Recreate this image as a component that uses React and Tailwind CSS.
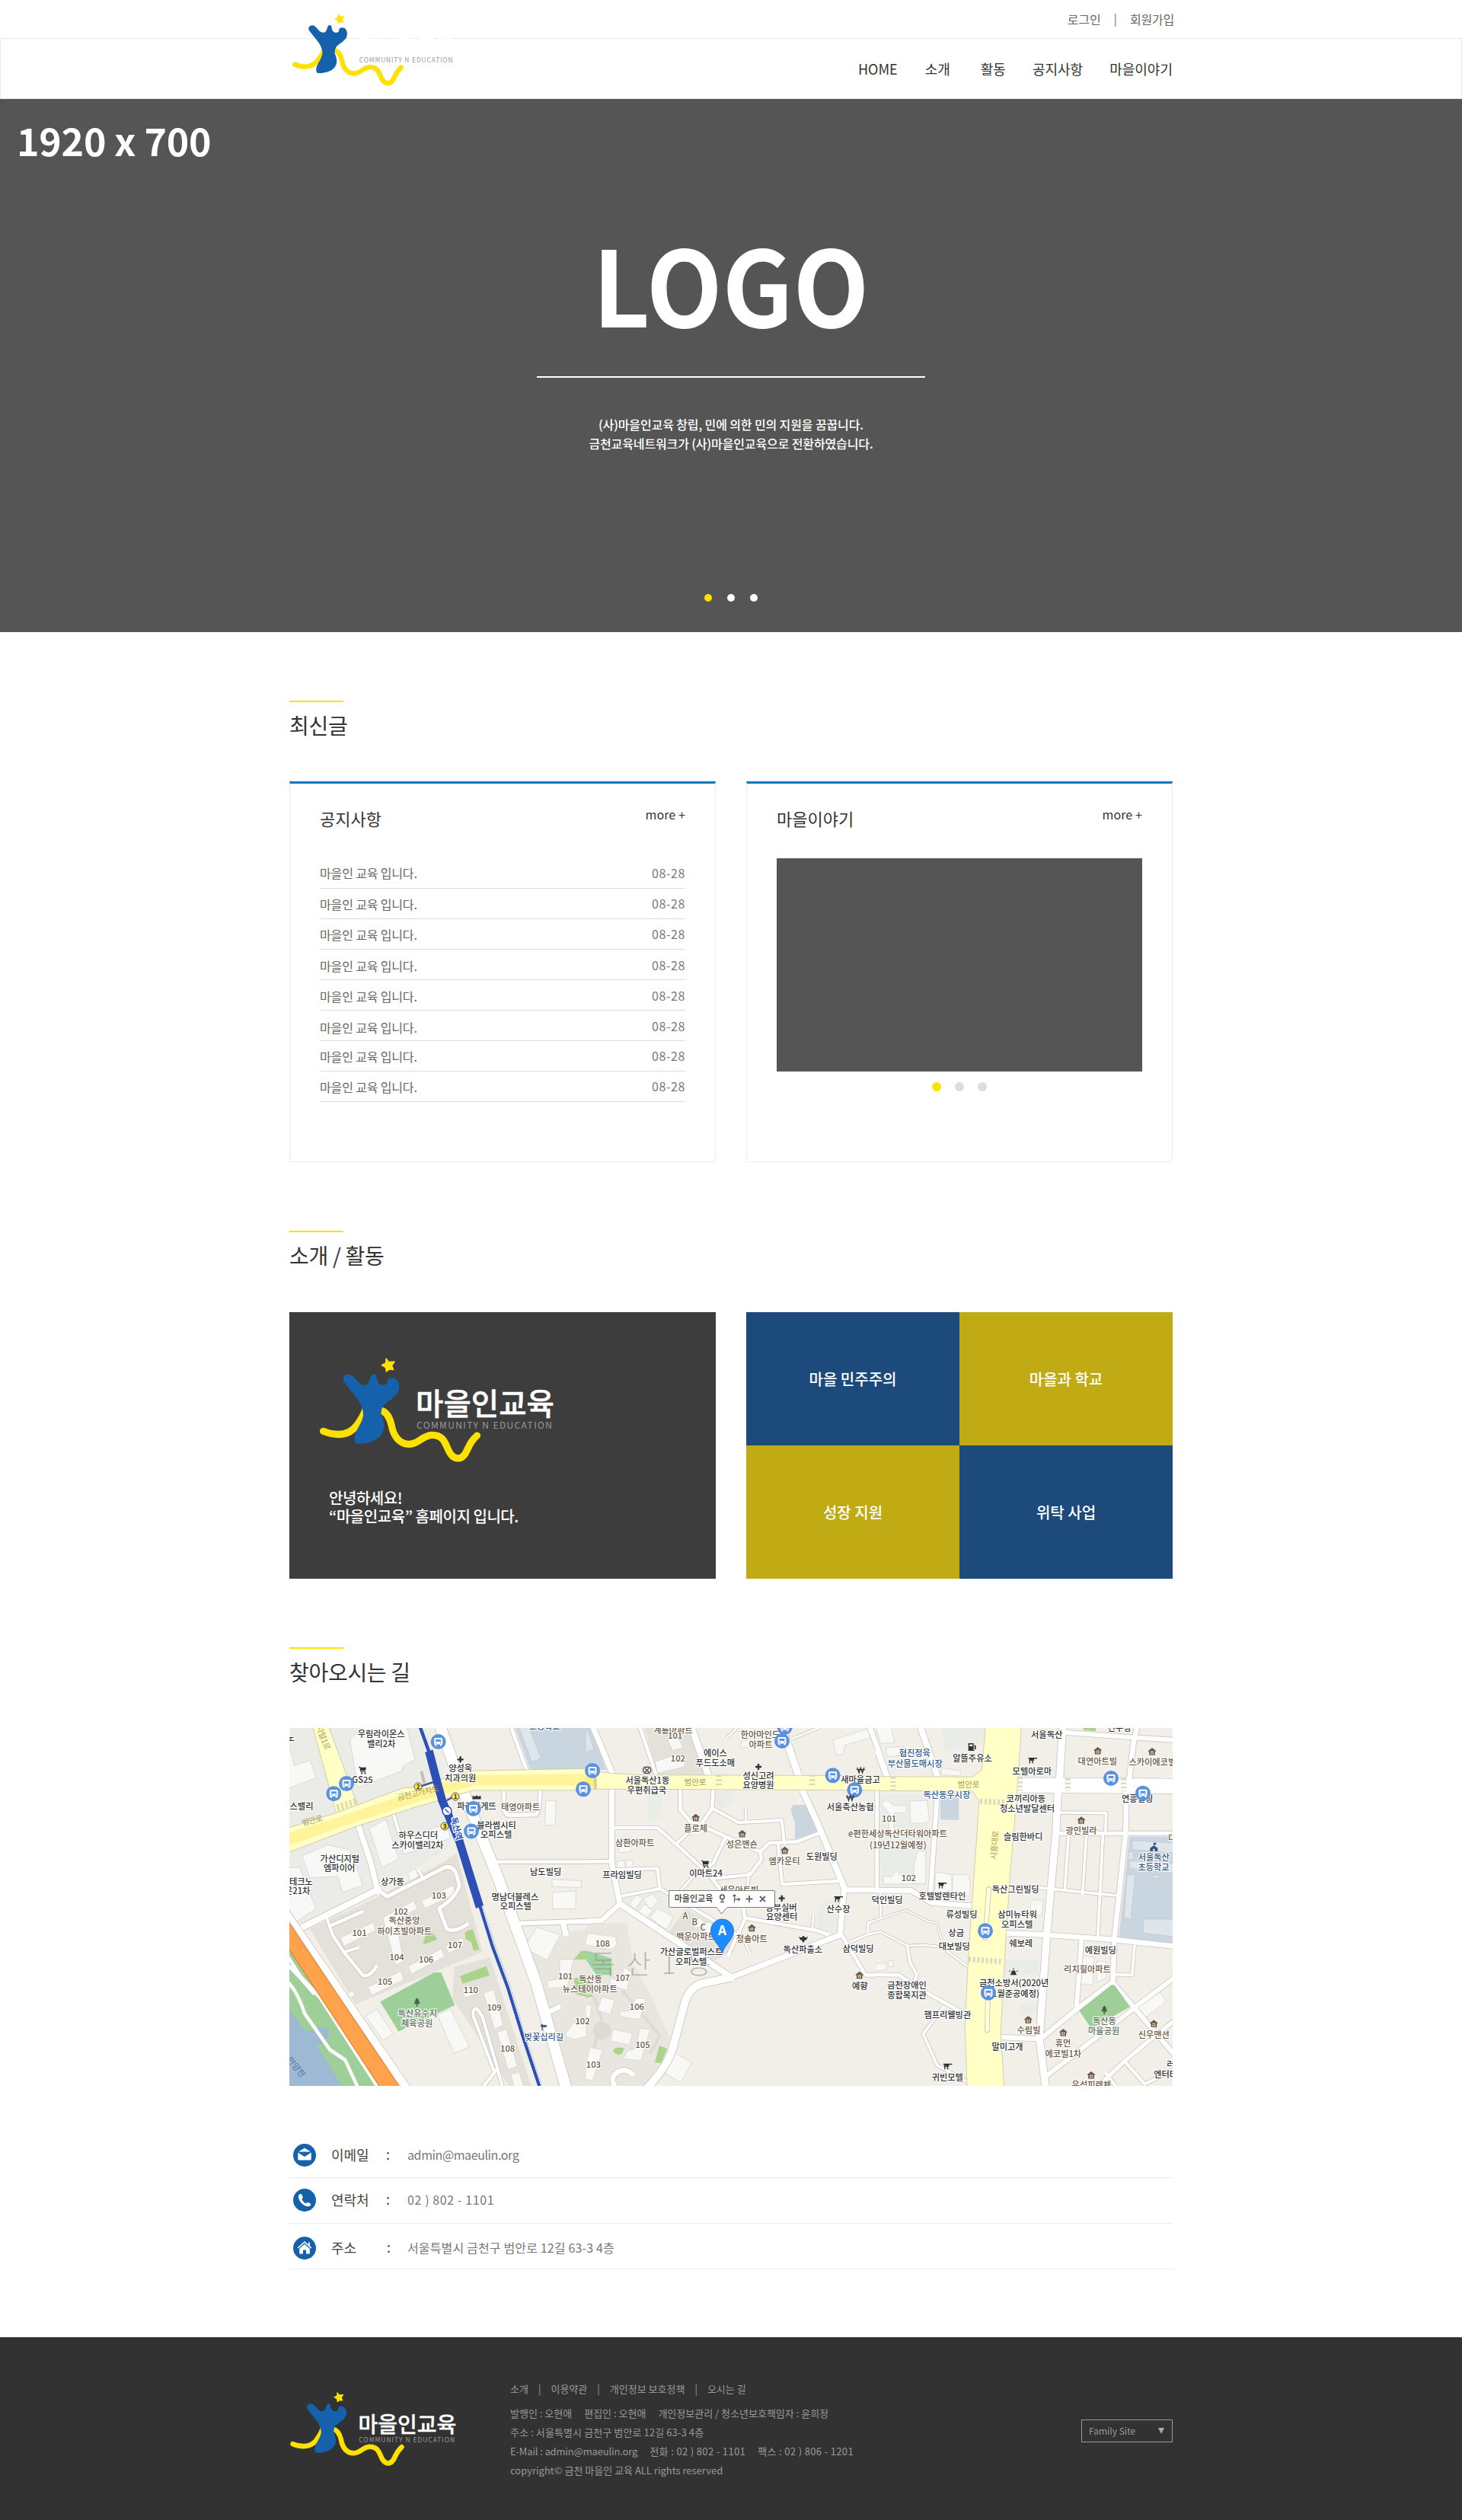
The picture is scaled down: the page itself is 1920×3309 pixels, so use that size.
import React from "react";

const YELLOW = "#ffe100";
const BLUE = "#1661ac";

function Logo({ className }) {
  return (
    <svg viewBox="0 0 307 137" className={className} role="img" aria-label="마을인교육">
      <g fill="none" stroke={YELLOW} strokeWidth="9.2" strokeLinecap="round">
        <path d="M4.6 96.3C22 103 38 103 49 88C54 81 57 77 60 68" />
        <path d="M80 69C89 71 92 80 94 88C97 104 105 113 117.500 113.300C131 113 134 102 147 101.300C166 101 165 118 172 126.500C178 134 186 134 191.500 125C197 114 198 110 206.500 102" />
      </g>
      <path
        fill={BLUE}
        d="M32 32C29 27 32 21.500 38 21.700C45 22 49 32 55 35C62 37 64 34 65.600 29C67 23 69 21.300 71 21.300C74 21.300 74.500 24 75.400 30C77 34 81 36 84 35.600C91 35 87 30 90 27.500C94 25 100 26 102 30C105 36 104.500 40 103 44C99 53 88 57 83.500 63C80 68 80.500 73 81 76C84 83 85 88 84 93C82 103 75 108 64.700 111C58 113 53 113 48.200 112.700C45 111 44.500 105 46 101C49 92 56 85 57 75C57.500 66 51 55 45.500 49Z"
      />
      <path
        fill={YELLOW}
        stroke={YELLOW}
        strokeWidth="1.500"
        strokeLinejoin="round"
        d="M87 1L90.500 5.500L98 5L94.500 10L96.500 15.500L91 15L87.500 18L86.500 12.500L81.500 9.500L86.700 7Z"
      />
      <text x="126" y="75" fontSize="40" fontWeight="500" fill="#fff" stroke="#fff" strokeWidth="0.5" textLength="182" lengthAdjust="spacingAndGlyphs">
        마을인교육
      </text>
      <text x="127" y="93" fontSize="12" fill="#999" textLength="178">
        COMMUNITY N EDUCATION
      </text>
    </svg>
  );
}

function SectionTitle({ children }) {
  return (
    <div className="h-[106px]">
      <div className="h-0.5 w-[71px] bg-[#ffe100]" />
      <h2 className="pt-[10px] text-[28px] leading-[40px] tracking-[-0.3px] text-[#333]">{children}</h2>
    </div>
  );
}

const notices = [
  { pad: "pt-0", date: "pt-0" },
  { pad: "pt-[1px]", date: "pt-0" },
  { pad: "pt-[1px]", date: "pt-0" },
  { pad: "pt-[2px]", date: "pt-[1px]" },
  { pad: "pt-[2px]", date: "pt-[1px]" },
  { pad: "pt-[3px]", date: "pt-[1px]" },
  { pad: "pt-[1px]", date: "pt-0" },
  { pad: "pt-[1px]", date: "pt-0" },
];

function PanelHead({ title }) {
  return (
    <div className="flex h-8 justify-between text-[#333]">
      <h3 className="text-[22px] leading-[30px]">{title}</h3>
      <a className="text-base leading-5 tracking-[0.1px]">more +</a>
    </div>
  );
}

/* ---------- Map ---------- */

// Each sheet has its own drawing grid that is projected onto the map.
const sheets = {
  w: { ox: -10, oy: -119, sx: 1 / 3, sy: 0.3827 },
  c: { ox: 360, oy: -9, sx: 1 / 3, sy: 1 / 3 },
  e: { ox: 760, oy: -9, sx: 1 / 3, sy: 1 / 3 },
};
const matrix = (s) => `matrix(${s.sx} 0 0 ${s.sy} ${s.ox} ${s.oy})`;

const roads = {
  w: [
    ["M622 300L720 540L850 820L1000 1180L1125 1560", 42],
    ["M900 300L965 455", 14],
    ["M835 770L1210 770", 12],
    ["M920 982L1210 974", 16],
    ["M300 640L350 770L378 870", 22],
    ["M70 1000L380 865", 22],
    ["M385 870L415 890L640 790Q680 780 690 820L700 850Q690 890 620 930L650 1000Q680 1015 730 985", 14],
    ["M180 970L200 1020L245 1080L320 1160Q350 1165 372 1130", 12],
    ["M190 990L316 942", 12],
    ["M245 1080L300 1065", 10],
    ["M875 520L875 590Q880 610 900 610L1000 608Q1018 605 1018 520", 14],
    ["M440 605L465 680", 12],
    ["M540 800L560 830", 10],
    ["M835 1485L755 1300Q750 1270 770 1275L790 1300L850 1480L870 1545", 12],
    ["M790 1545L850 1480", 12],
    ["M1110 985L1118 1015", 22],
    ["M1040 1290L1090 1270", 18],
  ],
  c: [
    ["M115 20L190 200L190 560L222 720", 22],
    ["M300 20L365 212", 14],
    ["M503 20L570 212", 26],
    ["M860 20L925 212", 28],
    ["M940 270L1000 400L1110 665", 24],
    ["M1205 20L1262 170", 20],
    ["M460 265L460 350L500 395L540 410L585 345L590 265", 14],
    ["M590 345L690 400L860 390L870 480", 12],
    ["M540 410L640 455L775 515L810 480L920 475L1010 440", 14],
    ["M205 420L370 420L450 490L570 600L620 665", 13],
    ["M448 480L520 412", 12],
    ["M640 455L590 560L560 580", 13],
    ["M775 515L780 545L735 605L590 620", 13],
    ["M845 480L862 643L1080 630", 13],
    ["M-10 555L185 552", 14],
    ["M210 585L370 580L380 660L225 690", 12],
    ["M380 660L600 790L680 840", 13],
    ["M222 720L150 785L-10 795", 20],
    ["M222 720L660 1008", 24],
    ["M660 1010L540 1035Q490 1055 475 1120L430 1290Q410 1360 325 1450", 30],
    ["M660 1010L1090 842L1105 665", 22],
    ["M1105 665L1270 665", 20],
    ["M715 775L1000 825L1040 840", 14],
    ["M650 920L715 780L710 740", 14],
    ["M980 820L985 765", 8],
    ["M1095 840L1190 1000L1270 1000", 14],
    ["M1130 870L1200 840L1262 828M1200 830L1200 795L1262 775", 9],
    ["M520 600L460 670M730 600L725 650", 10],
    ["M718 340L718 400M710 860L735 915", 8],
    ["M1235 275L1235 660", 14],
    ["M-10 1330L20 1445", 20],
    ["M200 1437Q180 1390 230 1376Q250 1372 270 1390", 20],
    ["M640 70L690 20M900 70L1010 25", 8],
  ],
  e: [
    ["M5 20L75 222", 24],
    ["M205 20L275 222", 24],
    ["M600 252L1210 256", 58],
    ["M767 20L755 225M748 285L740 440L705 830L675 1250L700 1445", 28],
    ["M780 45L1060 65L1210 75", 18],
    ["M1060 20L1045 90L1030 225", 20],
    ["M1018 285L1015 440L970 860L965 1030", 20],
    ["M752 360L938 362L935 440", 11],
    ["M740 442L1210 442", 16],
    ["M790 450L775 665M860 450L845 680M925 450L905 855", 11],
    ["M610 650L980 687", 11],
    ["M545 835L700 842L960 860L1210 887", 20],
    ["M840 870L822 1120", 18],
    ["M1050 885L1040 1000L970 998", 11],
    ["M525 1245L680 1252L830 1128L962 1028L1050 1130L1210 1318", 19],
    ["M1050 1128L1210 1008M1050 1130L700 1400", 18],
    ["M1210 1178L1130 1240L1010 1340L900 1445", 16],
    ["M1010 1340L1090 1430L1210 1370M940 1390L980 1445", 13],
    ["M35 275L35 660", 14],
    ["M272 300L245 690", 18],
    ["M-10 667L170 667L250 715L410 728", 20],
    ["M50 680L50 770", 8],
    ["M-10 797L150 745L235 788L270 795L290 865", 6],
    ["M-10 842L50 830L155 885L220 882L290 890L390 965", 8],
    ["M155 885L165 950L193 1000L180 1030", 11],
    ["M-10 998L120 1000L230 1070L385 1155", 14],
    ["M295 1130L217 1232L272 1355L390 1420", 11],
  ],
};

const yellow = {
  w: [
    "M120 300L182 300L300 578L215 605Z",
    "M20 655L215 602L480 516L510 516L740 458L1210 450L1210 525L755 525L530 582L290 650L20 740Z",
  ],
  c: ["M-5 193L60 192L200 206L300 212L1265 215L1265 273L300 268L-5 268Z"],
  e: [
    "M-5 218L412 220L448 192L463 20L604 20L587 280L560 600L543 850L522 1230L536 1445L390 1445L382 1200L395 930L438 315L410 276L-5 274Z",
  ],
};

const buildings = {
  w: [
    "M268 350L330 300L490 300L525 420L480 440L470 460L300 515Z",
    "M30 370L50 440L112 422L135 482L20 520L20 380Z",
    "M80 750L180 712L270 730L320 850L240 875L220 820L110 825Z",
    "M345 655L410 625L460 760L395 790Z",
    "M470 690L650 640L665 690L480 745Z",
    "M20 790L70 790L135 930L60 975L20 920Z",
    "M495 810L525 793L540 820L508 836Z",
    "M550 905L675 850L685 880L565 930Z",
    "M400 960L520 905L535 930L450 970L480 1110L450 1125L405 985Z",
    "M232 1030L360 978L370 1005L245 1060Z",
    "M645 1060L712 1030L720 1055L658 1085Z",
    "M498 1128L630 1068L642 1095L512 1155Z",
    "M340 1200L470 1145L480 1175L355 1228Z",
    "M260 1220L282 1213L288 1230L268 1238Z",
    "M330 1300L375 1275L438 1360L400 1383Z",
    "M612 1295L665 1275L740 1405L680 1428Z",
    "M712 1208L775 1193L780 1220L720 1237Z",
    "M795 1220L835 1208L873 1330L838 1345Z",
    "M848 1355L885 1345L928 1470L892 1485Z",
    "M903 1500L935 1490L955 1545L915 1545Z",
    "M955 1065L1005 995L1098 1020L1045 1108Z",
    "M1040 560L1080 560L1078 645L1037 645Z",
    "M1065 875L1160 870L1158 932L1068 932Z",
    "M1065 830L1180 835L1180 858L1065 855Z",
    "M1095 1105L1150 1105L1125 1200L1050 1205L1045 1180L1095 1170Z",
    "M1150 1320L1200 1320L1200 1370L1150 1380L1115 1365Z",
  ],
  c: [
    "M360 160L450 130L480 160L475 180L370 205Z",
    "M410 75L450 60L470 105L430 115Z",
    "M700 80L760 65L765 100L698 104Z",
    "M1060 75L1200 30L1210 65L1110 95L1100 130L1075 135Z",
    "M218 465L265 460L265 515L218 518Z",
    "M210 553L240 548L242 578L212 580ZM245 550L272 547L274 576L248 578Z",
    "M-5 625L72 625L70 660L-5 660ZM-5 670L50 670L48 738L-5 738Z",
    "M258 720L290 685L312 700L282 740Z",
    "M315 700L352 680L375 710L340 740ZM290 755L320 720L352 745L322 780Z",
    "M340 775L370 738L435 770L405 822Z",
    "M95 835L205 850L210 880L190 900L85 880Z",
    "M-5 940L40 940L30 1000L-5 1020Z",
    "M240 970L268 990L250 1060L180 1040L185 1015L225 1015Z",
    "M150 1085L202 1100L185 1155L135 1140Z",
    "M285 1090L325 1095L300 1175L225 1165L220 1145L265 1140Z",
    "M75 1115L112 1120L105 1165L60 1250L5 1220L5 1195L50 1190Z",
    "M195 1215L272 1230L260 1275L185 1260Z",
    "M300 1210L342 1215L305 1338L235 1330L250 1300L285 1290Z",
    "M105 1285L155 1295L115 1415L50 1405L48 1375L85 1365Z",
    "M440 1308L505 1345L462 1425L400 1387Z",
    "M505 790L540 775L560 800L520 815ZM545 800L580 790L600 830L560 835Z",
  ],
  e: [
    "M30 20L90 20L105 85L50 88Z",
    "M70 105L140 100L140 135L75 140Z",
    "M52 325L72 308L100 332L150 332L150 360L102 362L102 435L82 435L82 362Z",
    "M165 315L232 312L242 390L225 402L168 402Z",
    "M60 612L95 612L110 590L135 612L182 612L180 575L195 512L227 512L227 640L62 642Z",
    "M275 595L330 605L330 700L262 705L265 600Z",
    "M333 605L395 605L403 640L400 690L333 672Z",
    "M290 185L365 195L362 215L290 212Z",
    "M640 705L690 705L685 765L640 762Z",
    "M845 925L890 930L885 1040L838 1035Z",
    "M900 945L940 948L940 1010L900 1030Z",
    "M1060 1130L1150 1065L1175 1105L1090 1170Z",
    "M30 955L70 952L72 980L30 983ZM78 945L98 942L100 965L80 968Z",
  ],
};

const DARK = "#2f3338";
const BROWN = "#6a5744";
const NAVY = "#2f5f96";

// [sheet, centre x, centre y, text, colour]
const labels = [
  ["w", 392, 330, "우림라이온스"], ["w", 392, 364, "밸리2차"],
  ["w", 318, 488, "GS25"], ["w", 78, 579, "스밸리"],
  ["w", 704, 449, "양성욱"], ["w", 704, 483, "치과의원"],
  ["w", 768, 579, "파리바게뜨"], ["w", 941, 583, "태영아파트", BROWN],
  ["w", 846, 645, "블라썸시티"], ["w", 845, 677, "오피스텔"],
  ["w", 538, 680, "하우스디더"], ["w", 535, 713, "스카이밸리2차"],
  ["w", 229, 759, "가산디지털"], ["w", 227, 792, "엠파이어"],
  ["w", 76, 837, "테크노"], ["w", 62, 870, "운21차"],
  ["w", 436, 837, "상가동"], ["w", 1040, 805, "남도빌딩"],
  ["w", 919, 890, "명남더블레스"], ["w", 922, 923, "오피스텔"],
  ["w", 483, 972, "독산중앙", BROWN], ["w", 484, 1007, "하이츠빌아파트", BROWN],
  ["w", 619, 885, "103", BROWN], ["w", 469, 939, "102", BROWN],
  ["w", 306, 1013, "101", BROWN], ["w", 453, 1096, "104", BROWN],
  ["w", 569, 1106, "106", BROWN], ["w", 683, 1054, "107", BROWN],
  ["w", 407, 1180, "105", BROWN], ["w", 745, 1210, "110", BROWN],
  ["w", 837, 1269, "109", BROWN], ["w", 890, 1410, "108", BROWN],
  ["w", 1118, 1162, "101", BROWN],
  ["w", 535, 1290, "독산유수지", "#5d6e5b"], ["w", 533, 1323, "체육공원", "#5d6e5b"],
  ["w", 1033, 1372, "벚꽃십리길", "#3c5e8e"],
  ["w", 1036, 306, "고등학교", NAVY], ["w", 36, 345, "노"],

  ["c", 432, 36, "계룡아파트", BROWN], ["c", 440, 57, "101", BROWN], ["c", 451, 147, "102", BROWN],
  ["c", 775, 53, "한아마인드", BROWN], ["c", 777, 93, "아파트", BROWN],
  ["c", 598, 124, "에이스"], ["c", 598, 163, "푸드도소매"],
  ["c", 768, 215, "성신고려"], ["c", 768, 252, "요양병원"],
  ["c", 331, 234, "서울독산1동"], ["c", 328, 272, "우편취급국"],
  ["c", 1170, 230, "새마을금고"], ["c", 1130, 339, "서울축산농협"],
  ["c", 521, 421, "플로체", BROWN], ["c", 281, 480, "삼환아파트", BROWN],
  ["c", 703, 485, "성은맨숀", BROWN], ["c", 870, 550, "엠카운티", BROWN],
  ["c", 1018, 532, "도원빌딩"], ["c", 231, 606, "프라임빌딩"], ["c", 561, 600, "이마트24"],
  ["c", 692, 665, "세운아트빌", BROWN], ["c", 858, 733, "남부실버"], ["c", 860, 771, "요양센터"],
  ["c", 1083, 741, "산수장"], ["c", 480, 766, "A", BROWN], ["c", 517, 791, "B", BROWN], ["c", 549, 811, "C", BROWN],
  ["c", 522, 849, "백운아파트", BROWN], ["c", 742, 856, "청솔아트", BROWN],
  ["c", 504, 909, "가산글로벌퍼스트"], ["c", 503, 947, "오피스텔"],
  ["c", 943, 899, "독산파출소"], ["c", 1161, 897, "삼덕빌딩"], ["c", 1168, 1042, "예향"],
  ["c", 154, 874, "108", BROWN], ["c", 233, 1009, "107", BROWN], ["c", 289, 1124, "106", BROWN],
  ["c", 75, 1180, "102", BROWN], ["c", 312, 1273, "105", BROWN], ["c", 118, 1351, "103", BROWN],
  ["c", 106, 1015, "독산동", BROWN], ["c", 104, 1056, "뉴스테이아파트", BROWN],

  ["e", 184, 124, "협진정육", NAVY], ["e", 185, 167, "부산물도매시장", NAVY],
  ["e", 411, 145, "알뜰주유소"], ["e", 704, 53, "서울독산"], ["e", 646, 197, "모텔아로마"],
  ["e", 904, 159, "대연아트빌", BROWN], ["e", 1120, 162, "스카이에코빌", BROWN],
  ["e", 990, 27, "건우정"], ["e", 1061, 304, "연흥빌딩"],
  ["e", 310, 291, "독산동우시장", NAVY],
  ["e", 622, 306, "코끼리아동"], ["e", 627, 345, "청소년발달센터"],
  ["e", 83, 383, "101", BROWN], ["e", 160, 618, "102", BROWN],
  ["e", 117, 443, "e편한세상독산더타워아파트", BROWN], ["e", 118, 488, "(19년12월예정)", BROWN],
  ["e", 611, 456, "슬림한바디"], ["e", 840, 432, "광민빌라", BROWN],
  ["e", 1126, 535, "서울독산", "#34567f"], ["e", 1125, 574, "초등학교", "#34567f"],
  ["e", 1198, 462, "대", BROWN],
  ["e", 581, 662, "독산그린빌딩"], ["e", 292, 689, "호텔발렌타인"], ["e", 75, 703, "덕인빌딩"],
  ["e", 369, 762, "류성빌딩"], ["e", 588, 762, "삼미뉴타워"], ["e", 587, 801, "오피스텔"],
  ["e", 347, 832, "상금"], ["e", 340, 888, "대보빌딩"], ["e", 602, 875, "쉐보레"],
  ["e", 916, 901, "예원빌딩"], ["e", 864, 976, "리치힐아파트", BROWN],
  ["e", 575, 1031, "금천소방서(2020년"], ["e", 582, 1072, "1월준공예정)"],
  ["e", 153, 1041, "금천장애인"], ["e", 153, 1080, "종합복지관"], ["e", 313, 1157, "햄프리웰빙관"],
  ["e", 931, 1180, "독산동", "#5d6e5b"], ["e", 929, 1219, "마을공원", "#5d6e5b"],
  ["e", 633, 1218, "수림빌", BROWN], ["e", 1126, 1235, "신우맨션", BROWN],
  ["e", 768, 1269, "휴먼", BROWN], ["e", 769, 1309, "에코빌1차", BROWN],
  ["e", 549, 1283, "말미고개"], ["e", 313, 1402, "귀빈모텔"],
  ["e", 880, 1432, "우성피렌체", BROWN], ["e", 1192, 1352, "러"], ["e", 1172, 1392, "엔터테"],
];

const marks = [
  ["w", 617, 358, "bus"], ["w", 255, 502, "bus"], ["w", 205, 536, "bus"], ["w", 755, 588, "bus"], ["w", 747, 665, "bus"],
  ["c", 114, 195, "bus"], ["c", 78, 268, "bus"], ["c", 872, 24, "bus"], ["c", 861, 78, "bus"], ["c", 1061, 214, "bus"], ["c", 1147, 271, "bus"],
  ["e", 957, 225, "bus"], ["e", 1083, 284, "bus"], ["e", 462, 826, "bus"], ["e", 474, 1070, "bus"],
  ["w", 704, 419, "plus"], ["c", 768, 180, "plus"], ["c", 860, 698, "plus"],
  ["w", 318, 455, "cart"], ["c", 558, 562, "cart"],
  ["c", 521, 380, "home"], ["c", 704, 444, "home"], ["c", 872, 509, "home"], ["c", 742, 815, "home"], ["c", 1166, 1001, "home"],
  ["e", 905, 117, "home"], ["e", 1119, 120, "home"], ["e", 840, 391, "home"], ["e", 631, 1177, "home"],
  ["e", 1126, 1192, "home"], ["e", 769, 1227, "home"], ["e", 879, 1395, "home"],
  ["w", 533, 1252, "tree"], ["e", 931, 1138, "tree"],
  ["c", 1171, 193, "won"], ["c", 1130, 302, "won"],
  ["e", 648, 156, "bed"], ["e", 292, 648, "bed"], ["e", 313, 1361, "bed"], ["c", 1083, 702, "bed"],
  ["w", 1033, 1338, "sign"], ["e", 410, 102, "fuel"], ["e", 1126, 497, "school"],
  ["c", 945, 859, "bird"], ["e", 573, 988, "siren"], ["c", 329, 193, "post"], ["w", 768, 550, "bread"],
];

function Mark({ kind }) {
  switch (kind) {
    case "bus":
      return (
        <g>
          <circle r="10" fill="#5b92df" />
          <path fill="#fff" d="M-4-5H4Q5.500-5 5.500-3.500V3.500H4.500V5.500H2.500V3.500H-2.500V5.500H-4.500V3.500H-5.500V-3.500Q-5.500-5-4-5Z" />
          <path fill="#5b92df" d="M-3.500-3H3.500V0H-3.500ZM-3.800 1.200H-2.200V2.400H-3.800ZM2.200 1.200H3.800V2.400H2.200Z" />
        </g>
      );
    case "plus":
      return <path d="M0-4V4M-4 0H4" stroke={DARK} strokeWidth="2.400" />;
    case "cart":
      return (
        <g fill={DARK}>
          <path d="M-5-4.500H-3L-2.500-3.500H5L4 1H-2L-1.500 2.200H4.500V3.200H-2.300L-3.800-3.500H-5Z" />
          <circle cx="-1" cy="4.500" r="1" />
          <circle cx="3.500" cy="4.500" r="1" />
        </g>
      );
    case "home":
      return (
        <g>
          <path fill={BROWN} d="M0-5L5-1V0H3.800V4.500H-3.800V0H-5V-1Z" />
          <path fill="#f2efe9" d="M-2-0.500H-.4V1H-2ZM.4-.5H2V1H.4ZM-2 1.700H-.4V3.200H-2ZM.4 1.700H2V3.200H.4Z" />
        </g>
      );
    case "tree":
      return <path fill="#46604a" d="M0-6L3-2H2L4 2H.8V5.500H-.8V2H-4L-2-2H-3Z" />;
    case "won":
      return <path fill="none" stroke={DARK} strokeWidth="1.300" d="M-4.500-3.500L-2.200 3.500L0-3L2.200 3.500L4.500-3.500M-5.500-.8H5.500" />;
    case "bed":
      return <path fill={DARK} d="M-5.500-4H6V-2.500H2V0H.8V3.500H-.6V0H-3V3.500H-4.300V-2.500H-5.500Z" />;
    case "sign":
      return <path fill="#3c5e8e" d="M-4-4H-1.500V-3H4L3-1.500L4 0H-1.500V4H-2.800V0H-4Z" />;
    case "fuel":
      return <path fill={DARK} fillRule="evenodd" d="M-5-5H2V4H3V5H-5ZM-3.500-3.500V-1H.5V-3.500ZM3-3L5-1.500V3H3.200V0H3Z" />;
    case "school":
      return <path fill="#2c4f78" d="M0-6H3V-3.500H.6V-2L5 1V5H1.200V2H-1.200V5H-5V1L-.5-2V-6Z" />;
    case "bird":
      return <path fill={DARK} d="M-6-3L-2-2L-1-4H1L2-2L6-3L4 1L2 1.500L0 5L-2 1.500L-4 1Z" />;
    case "siren":
      return <path fill={DARK} d="M-3 2.500Q-3-2 0-2Q3-2 3 2.500H4V4H-4V2.500ZM-.5-5H.5V-3.200H-.5ZM-5.500-2L-4-1L-4.500-.2L-6-1.200ZM5.500-2L4-1L4.500-.2L6-1.200Z" />;
    case "post":
      return (
        <g fill="none" stroke={DARK} strokeWidth="1.200">
          <path d="M-4.500-4L4.500 4M4.500-4L-4.500 4M-5-2.500V2.500M5-2.500V2.500M-3-4H3M-3 4H3" />
        </g>
      );
    default:
      return <path fill={DARK} d="M-5.500 2V-1Q-5.500-3-4-2.500L-2-.8Q-1.500-3 0-3T2-.8L4-2.500Q5.500-3 5.500-1V2Z" />;
  }
}

function Terrain({ sheet }) {
  return (
    <g>
      {buildings[sheet].map((d) => (
        <path key={d} d={d} fill="#f8f8f6" stroke="#d9d6d0" strokeWidth="2.500" />
      ))}
      {roads[sheet].map(([d, w]) => (
        <path key={d} d={d} fill="none" stroke="#c9c6c1" strokeWidth={w + 5} strokeLinejoin="round" />
      ))}
      {roads[sheet].map(([d, w]) => (
        <path key={d} d={d} fill="none" stroke="#fff" strokeWidth={w} strokeLinejoin="round" strokeLinecap="round" />
      ))}
      {yellow[sheet].map((d) => (
        <path key={d} d={d} fill="#ffffc6" stroke="#c9c7a8" strokeWidth="2.500" />
      ))}
    </g>
  );
}

function LocationMap() {
  return (
    <svg viewBox="0 0 1160 470" className="block h-[470px] w-[1160px] overflow-hidden" role="img" aria-label="지도">
      <defs>
        <clipPath id="west"><rect x="0" y="0" width="390" height="470" /></clipPath>
        <clipPath id="center"><rect x="390" y="0" width="380" height="470" /></clipPath>
        <clipPath id="east"><rect x="770" y="0" width="390" height="470" /></clipPath>
        <clipPath id="mapEdge"><rect x="0" y="0" width="1160" height="470" /></clipPath>
      </defs>
      <rect width="1160" height="470" fill="#f2efe9" />

      <g clipPath="url(#west)">
        <g transform={matrix(sheets.w)}>
          <path fill="#ebece8" d="M20 300L560 300L650 500L665 720L400 860L60 990L20 960Z" />
          <path fill="#e4e0da" d="M110 1000L380 890L640 770L690 740L790 1080L640 1135L290 1258Z" />
          <path fill="#e4e0da" d="M680 1130L820 1098L985 1545L900 1545L720 1300L672 1240Z" />
          <path fill="#e9e6e0" d="M930 1040L1210 1000L1210 1545L1130 1545Z" />
          <path fill="#cad6df" d="M915 300L1210 300L1210 452L978 452Z" />
          <path fill="#dfe6eb" stroke="#b9c6d0" strokeWidth="2" d="M930 300L970 300L1022 415L985 428Z" />
          <path fill="#9fcf99" d="M388 1250L600 1150L628 1150L682 1262L460 1352Z" />
          <path fill="#acd38a" d="M556 1055L565 1025L590 1005L612 1037ZM722 1012L752 1000L779 1072L757 1075L745 1045L724 1035ZM703 1162L806 1128L818 1160L712 1188ZM1150 1105L1180 1075L1210 1075L1210 1105ZM1150 1170L1210 1160L1210 1235L1160 1225Z" />
          <Terrain sheet="w" />
          <path fill="#fff39b" d="M20 672L220 618L500 535L740 473L1210 468L1210 508L755 508L525 568L290 633L20 718Z" />
          <path fill="#fff" stroke="#c9c6c1" strokeWidth="2.500" d="M20 925L510 1545L460 1545L20 960Z" />
          <path fill="#9fcf99" d="M20 1058L392 1545L230 1545L140 1400L20 1280Z" />
          <path fill="#9db9d4" d="M20 1268L95 1350L118 1350L150 1335L180 1340L188 1365L160 1395L140 1400L240 1545L20 1545Z" />
          <g fill="none" stroke="#fff" strokeWidth="13">
            <path d="M20 1180Q60 1210 90 1290L190 1415L250 1450L300 1545" />
            <path d="M20 1090L75 1165L150 1235L380 1545" />
            <path d="M20 1120L70 1165L130 1225" />
          </g>
          <path fill="#ffa24c" stroke="#dd8236" strokeWidth="3" d="M15 962L470 1548L390 1548L15 1052Z" />
          <path fill="none" stroke="#c4bfb2" strokeWidth="12" d="M550 460L562 500" />
          <g fill="none" stroke="#2d50b6">
            <path d="M542 300L580 392" strokeWidth="13" />
            <path d="M580 390L610 490L632 560L700 700L780 925" strokeWidth="32" />
            <path d="M780 920L830 1060L890 1200L950 1370L1018 1548" strokeWidth="12" />
            <path d="M545 512L605 495M650 560L680 545" strokeWidth="6" />
          </g>
          <path fill="none" stroke="#9aaed8" strokeWidth="4" strokeDasharray="4 5" d="M792 925L842 1060L902 1200L960 1370L1028 1548" />
          <g fill="none" stroke="#ddd9b4" strokeWidth="24" strokeDasharray="9 8">
            <path d="M218 585L298 560" />
          </g>
        </g>
      </g>

      <g clipPath="url(#center)">
        <g transform={matrix(sheets.c)}>
          <path fill="#cad6df" d="M-5 20L110 20L168 192L-5 192Z" />
          <path fill="#dfe6eb" stroke="#b9c6d0" strokeWidth="2" d="M50 35L90 25L120 110L85 125Z" />
          <path fill="#e4e0da" d="M318 20L497 20L562 212L372 212Z" />
          <path fill="#e9e6e0" d="M-5 800L250 795L275 960L330 1050L420 1250L400 1330L320 1440L-5 1440Z" />
          <path fill="#e4e0da" d="M415 830L480 740L680 840L640 920L560 960Z" />
          <path fill="#cad6df" d="M895 350L905 330L955 330L1000 440L912 465L912 400Z" />
          <path fill="#eaece7" d="M575 280L660 270L670 310L620 350ZM330 280L390 285L380 380L340 400ZM1000 730L1070 690L1090 830L1000 830ZM230 700L380 670L440 780L400 830Z" />
          <path fill="#9fd3a0" d="M68 910L100 905L190 935L190 1000L130 1000Z" />
          <path fill="#acd38a" d="M40 1010L60 1000L110 1030L115 1085L90 1088L35 1050ZM195 1300Q200 1280 240 1288L230 1310Q210 1320 195 1300ZM378 1278L408 1290L385 1348L360 1345Z" />
          <g fill="none" stroke="#dfdbd4" strokeWidth="12">
            <path d="M120 1085L150 1175L120 1290M0 1090L120 1070M230 1060L380 1240L340 1310M30 1370L60 1270" />
            <circle cx="152" cy="1220" r="30" fill="#dfdbd4" />
          </g>
          <Terrain sheet="c" />
          <path fill="#fff07c" d="M-5 205L115 208L130 240L115 262L-5 260Z" />
          <path stroke="#d8d0a0" strokeWidth="12" d="M125 210L125 268" />
          <path stroke="#ddd9b4" strokeWidth="24" strokeDasharray="7 10" d="M612 212L612 262M980 212L980 262" />
        </g>
      </g>

      <g clipPath="url(#east)">
        <g transform={matrix(sheets.e)}>
          <path fill="#eaece7" d="M45 290L240 290L230 650L50 650ZM290 20L460 20L460 80L300 120ZM540 940L672 935L670 1000L535 1000ZM600 1110L670 1110L665 1160L600 1155Z" />
          <path fill="#cad6df" d="M285 300L358 300L358 390L285 388ZM1030 455L1210 455L1210 880L988 850Z" />
          <path fill="#dfe6eb" stroke="#b9c6d0" strokeWidth="2" d="M1040 470L1210 480L1210 520L1040 505ZM1020 605L1052 605L1035 780L1008 775ZM1085 780L1210 780L1210 850L1085 835ZM1025 515L1045 515L1045 545L1025 545ZM1122 608H1148V618H1122ZM1030 550L1210 560L1210 600L1030 580Z" />
          <path fill="#acd38a" d="M845 20H897V40L850 36Z" />
          <Terrain sheet="e" />
          <path fill="#9fcf99" d="M832 1140L955 1042Q968 1035 975 1045L1032 1125L880 1212Z" />
          <g fill="none" stroke="#c9c7a8" strokeWidth="20" strokeLinecap="round">
            <path d="M476 662L461 855M472 1090L469 1217" />
            <path stroke="#ffffde" strokeWidth="15" d="M476 662L461 855M472 1090L469 1217" />
          </g>
          <g fill="none" stroke="#dcd9c0" strokeWidth="22">
            <path strokeDasharray="9 8" d="M442 316L578 322M396 938L530 948" />
            <path strokeDasharray="7 9" d="M99 220V274M598 222V274M787 226V276M1007 226V276" />
          </g>
        </g>
      </g>

      <g clipPath="url(#mapEdge)" textAnchor="middle" fontSize="11.200" fontWeight="500">
        <text x="475" y="323" fontSize="35" fontWeight="300" fill="#8f8f8f" fillOpacity="0.6" textLength="158">독산1동</text>
        <g fill="#a99b5c" fontSize="10.500" fontWeight="400">
          <text transform="translate(31 125) rotate(-15)" textLength="28">범안로</text>
          <text transform="translate(170 89) rotate(-13)" textLength="56">금천고가차도</text>
          <text transform="translate(41 14) rotate(68)" textLength="34">지털1로</text>
          <text x="533" y="75" textLength="29">범안로</text>
          <text x="892" y="78" textLength="29">범안로</text>
          <text transform="translate(930 154) rotate(-86)" textLength="38">시흥대로</text>
        </g>
        <text transform="translate(6 448) rotate(50)" fill="#5c80ac" fontSize="11">안양천</text>
        {labels.map(([s, x, y, t, c]) => (
          <text
            key={`${s}${x}-${y}`}
            x={x * sheets[s].sx + sheets[s].ox}
            y={y * sheets[s].sy + sheets[s].oy + 4.2}
            fill={c || DARK}
            stroke="#fff"
            strokeWidth="2.500"
            strokeOpacity="0.85"
            strokeLinejoin="round"
            paintOrder="stroke"
          >
            {t}
          </text>
        ))}
        {marks.map(([s, x, y, k]) => (
          <g key={`${s}${x}-${y}`} transform={`translate(${x * sheets[s].sx + sheets[s].ox} ${y * sheets[s].sy + sheets[s].oy})`}>
            <Mark kind={k} />
          </g>
        ))}

        <g fontSize="8" fontWeight="700">
          {[[169, 77, "2"], [218, 90, "1"], [204, 129, "3"]].map(([x, y, n]) => (
            <g key={n}>
              <circle cx={x} cy={y} r="5" fill="#ffe94d" stroke="#555" />
              <text x={x} y={y + 3} fill="#222">{n}</text>
            </g>
          ))}
          <circle cx="207" cy="109" r="6" fill="#fff" stroke="#2d50b6" strokeWidth="1.500" />
          <path d="M204.500 106.500L209.500 111.500" stroke="#2d50b6" strokeWidth="1.500" />
        </g>
        <text transform="translate(216 133) rotate(75)" fill="#2d50b6" stroke="#fff" strokeWidth="2.500" paintOrder="stroke" fontSize="11" fontWeight="700">독산역</text>

        <g>
          <path d="M498.500 213.500H637Q637.500 213.500 637.500 215V234Q637.500 235.500 636 235.500H575L567.500 244L561 235.500H500Q498.500 235.500 498.500 234Z" fill="#fff" stroke="#7b7b7b" />
          <text x="531" y="227.500" fill="#333" fontSize="11">마을인교육</text>
          <g fill="none" stroke="#666" strokeWidth="1.800">
            <circle cx="568.500" cy="222" r="2.800" />
            <path d="M568.500 225V229M566 228.500H571M584.500 219V229M582.500 221L584.500 219L586.500 221M585 225H591M589.500 223L591.500 225L589.500 227" strokeWidth="1.300" />
            <path d="M604 220V229M599.500 224.500H608.500M618 221L625 228M625 221L618 228" />
          </g>
        </g>
        <path d="M568.500 296C566 285 553.500 278 553.500 266A15 15 0 0 1 583.500 266C583.500 278 571 285 568.500 296Z" fill="#1e8cff" stroke="#1777e0" />
        <text x="568.500" y="272" fill="#fff" fontSize="17" fontWeight="700">A</text>
      </g>
    </svg>
  );
}

/* ---------- Contact icons ---------- */

function MailIcon() {
  return (
    <svg viewBox="0 0 30 30" className="size-[30px]">
      <circle cx="15" cy="15" r="15" fill={BLUE} />
      <path fill="#fff" d="M15 5.500L23 10.500H7Z" />
      <path fill="#fff" d="M6.300 11.500L15 17L23.700 11.500V20Q23.700 21.500 22.200 21.500H7.800Q6.300 21.500 6.300 20Z" />
    </svg>
  );
}

function PhoneIcon() {
  return (
    <svg viewBox="0 0 30 30" className="size-[30px]">
      <circle cx="15" cy="15" r="15" fill={BLUE} />
      <path fill="#fff" d="M8 7.500Q10 6 11.200 7.500L12.700 11Q13 12 11.300 13.500C12 16 14.500 18.500 17 19.300Q18.500 17.300 19.700 17.800L22.700 19.500Q24 20.800 22.500 22.200C20 24.500 15 23 11.500 19.500C7.500 15.500 5.500 10 8 7.500Z" />
    </svg>
  );
}

function HouseIcon() {
  return (
    <svg viewBox="0 0 30 30" className="size-[30px]">
      <circle cx="15" cy="15" r="15" fill={BLUE} />
      <path fill="none" stroke="#fff" strokeWidth="1.600" d="M6.200 14.800L15 7L23.800 14.800" />
      <path fill="#fff" d="M20 7.500H22V12L20 10.200ZM15 9.800L21.800 15.800V22.500H17V17.500H13V22.500H8.200V15.800Z" />
    </svg>
  );
}

const contacts = [
  { icon: MailIcon, label: "이메일", value: "admin@maeulin.org", row: "pt-[15px]", colon: "w-[28px]", track: "tracking-[-0.4px]" },
  { icon: PhoneIcon, label: "연락처", value: "02 ) 802 - 1101", row: "pt-[14px]", colon: "w-[28px]", track: "tracking-[0.6px]" },
  { icon: HouseIcon, label: "주소", value: "서울특별시 금천구 범안로 12길 63-3 4층", row: "pt-[17px]", colon: "w-[27px] ml-px", track: "tracking-[0.15px]" },
];

export default function App() {
  return (
    <div className="min-h-[3309px] w-[1920px] bg-white font-['Noto_Sans_CJK_KR','Noto_Sans',sans-serif] text-[#333]">
      <header className="relative h-[130px]">
        <div className="mx-auto flex h-[50px] w-[1160px] items-center justify-end gap-[17px] pb-px text-base leading-6 text-[#666]">
          <a>로그인</a>
          <span className="text-[15px]">|</span>
          <a className="-mr-0.5 tracking-[-0.2px]">회원가입</a>
        </div>
        <div className="h-20 border border-[#e9e9e9]">
          <nav className="mx-auto flex h-[78px] w-[1160px] items-center justify-end gap-[35px] pb-px text-lg leading-6 text-[#333]">
            <a>HOME</a>
            <a className="ml-px">소개</a>
            <a className="ml-[5px]">활동</a>
            <a>공지사항</a>
            <a>마을이야기</a>
          </nav>
        </div>
        <Logo className="absolute top-[18px] left-[384px] h-[95px] w-[212px]" />
      </header>

      <section className="relative flex h-[700px] flex-col items-center bg-[#555] text-white">
        <p className="absolute top-[17px] left-[22px] text-[50px] leading-[72px] font-bold tracking-[-0.2px]">1920 x 700</p>
        <h1 className="mt-[140px] scale-x-[0.94] text-[138px] leading-[200px] font-bold">LOGO</h1>
        <div className="mt-[24px] h-[2px] w-[510px] bg-white" />
        <p className="mt-[49px] text-center text-base leading-[25px] font-medium tracking-[-0.12px]">
          (사)마을인교육 창립, 민에 의한 민의 지원을 꿈꿉니다.
          <br />
          금천교육네트워크가 (사)마을인교육으로 전환하였습니다.
        </p>
        <div className="mt-auto mb-[40px] flex gap-5">
          <span className="size-2.5 rounded-full bg-[#ffe100]" />
          <span className="size-2.5 rounded-full bg-white" />
          <span className="size-2.5 rounded-full bg-white" />
        </div>
      </section>

      <main className="mx-auto w-[1160px] pt-[90px]">
        <section>
          <SectionTitle>최신글</SectionTitle>
          <div className="flex gap-10">
            <div className="h-[500px] w-[560px] border border-t-[3px] border-[#ececec] border-t-[#007bc3] px-[39px] pt-[30px]">
              <PanelHead title="공지사항" />
              <ul className="mt-[36px] text-base text-[#666]">
                {notices.map((n, i) => (
                  <li key={i} className="flex h-10 justify-between border-b border-[#ddd] leading-[38px]">
                    <span className={`tracking-[-0.15px] ${n.pad}`}>마을인 교육 입니다.</span>
                    <span className={`tracking-[0.6px] text-[#777] ${n.date}`}>08-28</span>
                  </li>
                ))}
              </ul>
            </div>
            <div className="h-[500px] w-[560px] border border-t-[3px] border-[#ececec] border-t-[#007bc3] px-[39px] pt-[30px]">
              <PanelHead title="마을이야기" />
              <div className="mt-[36px] h-[280px] bg-[#555]" />
              <div className="mt-[14px] flex justify-center gap-[18px]">
                <span className="size-3 rounded-full bg-[#ffe100]" />
                <span className="size-3 rounded-full bg-[#ddd]" />
                <span className="size-3 rounded-full bg-[#ddd]" />
              </div>
            </div>
          </div>
        </section>

        <section className="pt-[90px]">
          <SectionTitle>소개 / 활동</SectionTitle>
          <div className="mt-px flex gap-10">
            <div className="h-[350px] w-[560px] bg-[#3d3d3d] pt-[60px] pl-10 text-white">
              <Logo className="h-[137px] w-[307px]" />
              <p className="mt-[35px] pl-[12px] text-xl leading-6 font-medium tracking-[-0.45px]">
                안녕하세요!
                <br />
                “마을인교육” 홈페이지 입니다.
              </p>
            </div>
            <div className="grid h-[350px] w-[560px] grid-cols-2 grid-rows-2 text-xl font-medium text-white">
              <a className="flex items-center justify-center bg-[#1c4b7b]">마을 민주주의</a>
              <a className="flex items-center justify-center bg-[#c0ab14]">마을과 학교</a>
              <a className="flex items-center justify-center bg-[#c0ab14]">성장 지원</a>
              <a className="flex items-center justify-center bg-[#1c4b7b]">위탁 사업</a>
            </div>
          </div>
        </section>

        <section className="pt-[90px]">
          <SectionTitle>찾아오시는 길</SectionTitle>
          <LocationMap />
          <div className="pt-[61px]">
            {contacts.map(({ icon: Icon, label, value, row, colon, track }) => (
              <div key={label} className={`flex h-[60px] border-b border-[#ebebeb] ${row}`}>
                <div className="ml-[5px] size-[30px]">
                  <Icon />
                </div>
                <span className="ml-5 w-[72px] text-lg leading-[28px] text-[#444]">{label}</span>
                <span className={`text-lg leading-[26px] text-[#444] ${colon}`}>:</span>
                <span className={`text-base leading-[29px] text-[#777] ${track}`}>{value}</span>
              </div>
            ))}
          </div>
        </section>
      </main>

      <footer className="mt-[89px] h-60 bg-[#323232]">
        <div className="mx-auto flex w-[1160px] text-[13px] text-[#999]">
          <Logo className="mt-[72px] h-[97px] w-[220px]" />
          <div className="mt-[55px] ml-[70px]">
            <div className="flex gap-[13px] leading-[26px]">
              <a>소개</a>
              <span>|</span>
              <a>이용약관</a>
              <span>|</span>
              <a>개인정보 보호정책</a>
              <span>|</span>
              <a>오시는 길</a>
            </div>
            <div className="mt-[6px] leading-[25px]">
              <p className="flex gap-4">
                <span>발행인 : 오현애</span>
                <span>편집인 : 오현애</span>
                <span>개인정보관리 / 청소년보호책임자 : 윤희정</span>
              </p>
              <p className="tracking-[0.1px]">주소 : 서울특별시 금천구 범안로 12길 63-3 4층</p>
              <p className="flex gap-4">
                <span className="tracking-[-0.15px]">E-Mail : admin@maeulin.org</span>
                <span className="tracking-[0.35px]">전화 : 02 ) 802 - 1101</span>
                <span className="tracking-[0.35px]">팩스 : 02 ) 806 - 1201</span>
              </p>
              <p>copyright© 금천 마을인 교육 ALL rights reserved</p>
            </div>
          </div>
          <button className="mt-[108px] ml-auto flex h-[30px] w-[120px] items-center justify-between border border-[#999] pr-2.5 pl-[9px] text-xs">
            Family Site
            <svg viewBox="0 0 8 8" className="size-2">
              <path d="M0 0H8L4 8Z" fill="#aaa" />
            </svg>
          </button>
        </div>
      </footer>
    </div>
  );
}
